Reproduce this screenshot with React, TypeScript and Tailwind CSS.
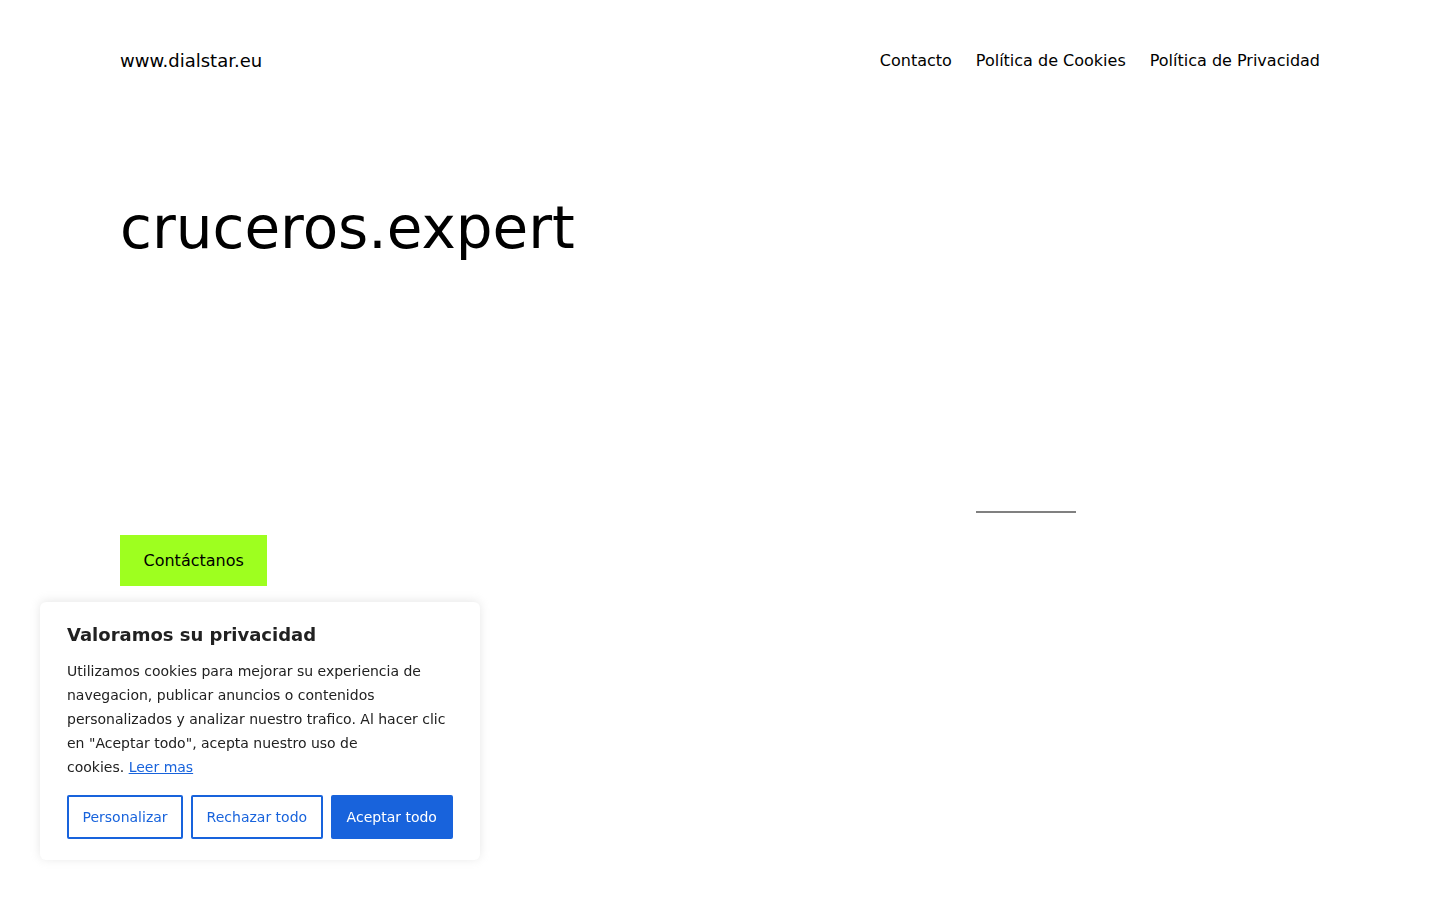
const font = { fontFamily: '"DejaVu Sans", sans-serif' };

function CookieBanner() {
    return (
        <div className="fixed left-10 bottom-10 w-[440px] rounded-md bg-white px-[27px] pt-[18px] pb-[21px] shadow-[0_-1px_10px_0_rgba(172,171,171,0.3)]">
            <p className="text-[18px] leading-[30px] font-bold text-[#212121] mb-[9px]">Valoramos su privacidad</p>
            <p className="text-[14px] leading-[24px] text-[#212121] pr-[6px]">
                Utilizamos cookies para mejorar su experiencia de navegacion, publicar anuncios o contenidos personalizados y analizar nuestro trafico. Al hacer clic en "Aceptar todo", acepta nuestro uso de{" "}
                <span className="whitespace-nowrap">
                    cookies. <a href="#" className="text-[#1863dc] underline">Leer mas</a>
                </span>
            </p>
            <div className="flex gap-2 mt-[16px] whitespace-nowrap">
                <button className="shrink-0 border-2 border-[#1863dc] text-[#1863dc] text-[14px] leading-[24px] px-[13.5px] py-2 rounded-[2px]">Personalizar</button>
                <button className="shrink-0 border-2 border-[#1863dc] text-[#1863dc] text-[14px] leading-[24px] px-[13.5px] py-2 rounded-[2px]">Rechazar todo</button>
                <button className="shrink-0 border-2 border-[#1863dc] bg-[#1863dc] text-white text-[14px] leading-[24px] px-[14px] py-2 rounded-[2px]">Aceptar todo</button>
            </div>
        </div>
    );
}

export default function App() {
    return (
        <div className="min-h-screen bg-white text-black" style={font}>
            <div className="mx-[120px]">
                <header className="flex items-center justify-between pt-[49px]">
                    <a href="#" className="text-[18px] leading-[24px]">www.dialstar.eu</a>
                    <nav className="flex gap-6 text-[16px] leading-[24px]">
                        <a href="#">Contacto</a>
                        <a href="#">Política de Cookies</a>
                        <a href="#">Política de Privacidad</a>
                    </nav>
                </header>

                <h1 className="mt-[123px] text-[58px] leading-[64px]">cruceros.expert</h1>

                <div className="mt-[251px] ml-[856px] w-[100px] h-[2px] bg-[#808080]" />

                <a href="#" className="mt-[22px] inline-block bg-[#9eff1f] px-[23.5px] py-[13px] text-[16px] leading-[25px]">Contáctanos</a>
            </div>
            <CookieBanner />
        </div>
    );
}
